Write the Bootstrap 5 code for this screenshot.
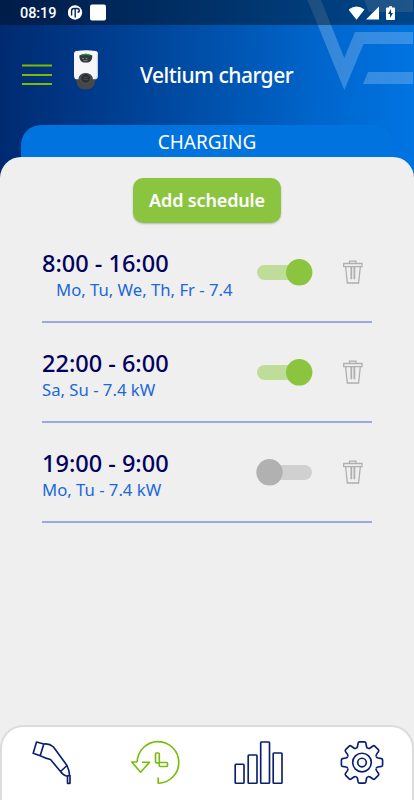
<!DOCTYPE html>
<html lang="en">
<head>
<meta charset="utf-8">
<meta name="viewport" content="width=device-width, initial-scale=1">
<title>Veltium charger</title>
<link href="https://cdn.jsdelivr.net/npm/bootstrap@5.3.0/dist/css/bootstrap.min.css" rel="stylesheet">
<style>
body{font-family:"Noto Sans","Open Sans",sans-serif;background:#efefef}
svg{display:block;flex:none}
.app{width:414px;height:800px;background:linear-gradient(91deg,#002a70 0,#003b8c 24%,#0050aa 50%,#0066cd 77%,#0074e2 100%) top/100% 200px no-repeat #efefef}
.brand-mark{position:absolute;top:0;left:0}
.status{height:25px;background:rgba(0,12,20,.44);padding:0 17px 0 20px}
.clock{font:500 14.5px/25px "Roboto",sans-serif;letter-spacing:-.1px;width:48px;padding-top:1px}
.top-bar{height:100px;padding-left:22px}
.title{font-size:21px;line-height:28px;font-weight:500;letter-spacing:-.5px;margin-left:41px}
.charger{margin:-10px 0 0 22px}
.tab-title{height:32px;margin:0 21px;background:#0073df;border-radius:20px 20px 0 0;font-size:19px;line-height:34px}
.sheet{background:#efefef;border-radius:21px 21px 0 0;padding-top:21px}
.btn-add{--bs-btn-color:#fff;--bs-btn-bg:#8bc53f;--bs-btn-hover-bg:#7eb636;--bs-btn-hover-color:#fff;width:148px;height:45px;border:0;border-radius:10px;font-size:18px;font-weight:600;letter-spacing:-.15px;padding:0;box-shadow:0 1px 2px rgba(0,0,0,.22)}
.schedules{margin:0 42px}
.slot{height:100px;border-bottom:2px solid #9ca9e1;padding-top:24px}
.slot-text{width:214px}
.hours{font-size:23.5px;line-height:32px;font-weight:500;color:#00005f}
.days{font-size:16.7px;line-height:22px;color:#1a68dc}
.inset{padding-left:14px}
.switch{width:57px;height:27px;margin-top:12px}
.switch .rail{fill:#bfdd98}.switch .knob{fill:#8bc53f}
.switch.off .rail{fill:#d0d0d0}.switch.off .knob{fill:#b1b1b1}
.bin{margin:13px 0 0 30px;fill:none;stroke:#afafaf;stroke-width:1.3}
.tabs{height:75px;background:#fff;border:2px solid #dcdcdc;border-bottom:0;border-radius:23px 23px 0 0}
.tabs svg{fill:none;stroke:#0b1f70;stroke-width:1.65;stroke-linejoin:round}
.tabs .active svg{stroke:#78bd0c}
</style>
</head>
<body>
<svg width="0" height="0" class="position-absolute"><defs>
<g id="bin"><path d="M6.500 3.500V1.200h6.400V3.500M.700 3.500h18.300v3.200H.700ZM2.600 6.700l1.700 16.300h11.300L17.300 6.700"/><path d="M8.300 6.700v12.500M11.400 6.700v12.500" stroke-width="1.800"/></g>
<path id="tooth" d="M-5.900-14.300Q-4.700-14.800-4.500-16L-3.900-19.500Q-3.600-20.600-2.500-20.600H2.500Q3.600-20.600 3.900-19.500L4.500-16Q4.700-14.800 5.900-14.300"/>
</defs></svg>
<div class="app position-relative d-flex flex-column overflow-hidden">
  <svg class="brand-mark" width="414" height="125" fill="#fff" fill-opacity=".21"><path d="M307.500 0H321L344.300 58 355 32H413V44H363.500L344.300 90ZM364 0H413V12H369ZM368 72H413V84H363Z"/></svg>
  <div class="status position-relative d-flex align-items-center text-white">
    <div class="clock">08:19</div>
    <svg width="38" height="17" viewBox="0 0 38 17"><circle cx="7" cy="8.500" r="7.200" fill="#fff"/><path d="M3.600 11.500V7Q3.600 4.500 6 4.500H7.200V13.500M7.200 4.500H9.500Q11.300 4.700 11.300 6.500T9.500 8.300" stroke="#002451" stroke-width="1.400" fill="none"/><rect x="22" y=".500" width="16" height="16" rx="2" fill="#fff"/></svg>
    <svg class="ms-auto" width="48" height="16" viewBox="0 0 48 16" fill="#fff"><path d="M-.500 4.500Q7.500-1.500 15.500 4.500L7.500 14.700ZM30 1.500V14.500H17Z"/><path d="M39 2.500h2V1.200h3v1.300h2q1 0 1 1V14q0 1-1 1h-7q-1 0-1-1V3.500q0-1 1-1Z" transform="translate(-1)"/><path d="m42 4-3 5h2v4l3-5h-2Z" fill="#003e80"/></svg>
  </div>
  <header class="top-bar position-relative d-flex align-items-center text-white">
    <svg width="30" height="22" stroke="#7fb900" stroke-width="2"><path d="M0 1.500H30M0 11H30M0 20H30"/></svg>
    <svg class="charger" width="25" height="40" viewBox="0 0 25 40"><path d="M2.500.900Q12-.300 21.500.900 24 1.200 24 4V25Q24 29.500 20.500 29.500H3Q0 29.500 0 25V4Q0 1.200 2.500.900Z" fill="#f7f7fa"/><path d="M23.400 4V25Q23.400 28.500 21 29" stroke="#c3cbd9" fill="none"/><path d="M5.300 5.500Q11.500 2 18.300 5.500 18.500 11.500 14 12.500H9.500Q5.200 11.500 5.300 5.500Z" fill="#34383d"/><path d="M7.500 5.300Q12 3.500 16 5.300" stroke="#278d43" stroke-width="1.200" fill="none"/><path d="M8 8.500h2m1.500 0h2m-4 2h4" stroke="#999da1" stroke-width=".7"/><path d="M2 29.500H4.500Q4.800 23 11.700 23T18.900 29.500H21.500Q21 39.500 11.700 39.500T2 29.500Z" fill="#46474b"/><circle cx="11.700" cy="28.500" r="4.900" fill="#2e3034" stroke="#55585c" stroke-width=".8"/><path d="M9.700 27.500h4m-4 2h4" stroke="#505357" stroke-width=".8"/></svg>
    <div class="title">Veltium charger</div>
  </header>
  <div class="tab-title position-relative text-white text-center">CHARGING</div>
  <main class="sheet position-relative flex-grow-1">
    <div class="text-center"><button class="btn btn-add" type="button">Add schedule</button></div>
    <div class="schedules">
      <section class="slot d-flex"><div class="slot-text"><div class="hours">8:00 - 16:00</div><div class="days inset">Mo, Tu, We, Th, Fr - 7.4</div></div>
        <svg class="switch"><rect class="rail" x="1" y="6" width="42" height="15" rx="7.500"/><circle class="knob" cx="43.200" cy="13.300" r="13.200"/></svg><svg class="bin" width="21" height="25"><use href="#bin"/></svg></section>
      <section class="slot d-flex"><div class="slot-text"><div class="hours">22:00 - 6:00</div><div class="days">Sa, Su - 7.4 kW</div></div>
        <svg class="switch"><rect class="rail" x="1" y="6" width="42" height="15" rx="7.500"/><circle class="knob" cx="43.200" cy="13.300" r="13.200"/></svg><svg class="bin" width="21" height="25"><use href="#bin"/></svg></section>
      <section class="slot d-flex"><div class="slot-text"><div class="hours">19:00 - 9:00</div><div class="days">Mo, Tu - 7.4 kW</div></div>
        <svg class="switch off"><rect class="rail" x="13" y="6" width="43" height="15" rx="7.500"/><circle class="knob" cx="13.500" cy="13.300" r="13.200"/></svg><svg class="bin" width="21" height="25"><use href="#bin"/></svg></section>
    </div>
  </main>
  <nav class="tabs position-relative d-flex">
    <a class="w-25" href="#" aria-label="Charger"><svg width="103" height="72" viewBox="2 727 103 72"><path d="M36.500 742L33.200 753.300 40.200 755.700 43.800 744ZM43.800 744Q49 743 53.500 747L67 765.500 60.500 771.500 50.500 759.500Q46 758.500 40.200 755.700M67 765.500Q69.500 771 69.500 775.500L66.500 776Q63.500 775.500 60.500 771.500M67.500 776V783.300H70V775"/></svg></a>
    <a class="w-25 active" href="#" aria-label="Schedule"><svg width="103" height="72" viewBox="105 727 103 72"><path d="M137.200 762A20.800 20.800 0 1 1 158.200 783.200V777.500M137.200 762H131.800L140.600 772.200 149.500 762.200H142"/><rect x="155.500" y="753" width="3.800" height="9.800" rx="1"/><rect x="159.300" y="762.500" width="8.200" height="4" rx="1"/></svg></a>
    <a class="w-25" href="#" aria-label="Statistics"><svg width="103" height="72" viewBox="207 727 103 72"><rect x="235.200" y="764.200" width="8.800" height="19" rx=".7"/><rect x="248.200" y="755" width="8.800" height="28.200" rx=".7"/><rect x="260.700" y="742" width="8.800" height="41.200" rx=".7"/><rect x="273.200" y="753" width="8.800" height="30.200" rx=".7"/></svg></a>
    <a class="w-25" href="#" aria-label="Settings"><svg width="103" height="72" viewBox="310 727 103 72"><g transform="translate(362 762.500)"><use href="#tooth"/><use href="#tooth" transform="rotate(45)"/><use href="#tooth" transform="rotate(90)"/><use href="#tooth" transform="rotate(135)"/><use href="#tooth" transform="rotate(180)"/><use href="#tooth" transform="rotate(225)"/><use href="#tooth" transform="rotate(270)"/><use href="#tooth" transform="rotate(315)"/><circle r="9.300"/><circle r="4.300"/></g></svg></a>
  </nav>
</div>
<script src="https://cdn.jsdelivr.net/npm/bootstrap@5.3.0/dist/js/bootstrap.bundle.min.js"></script>
</body>
</html>
